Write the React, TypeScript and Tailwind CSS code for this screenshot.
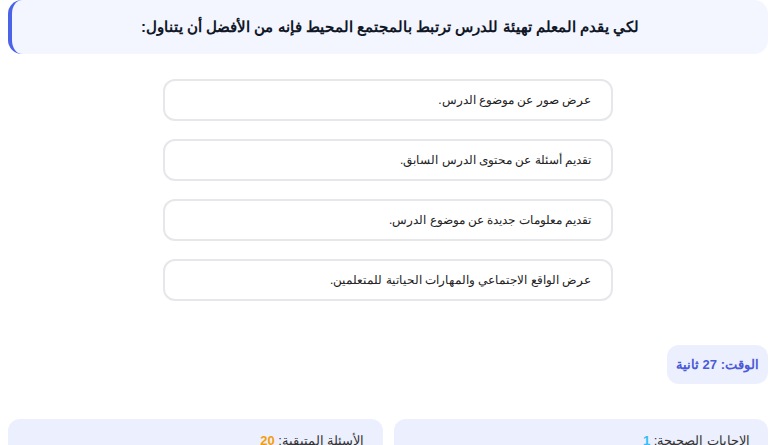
import React from "react";

const options = [
  "عرض صور عن موضوع الدرس.",
  "تقديم أسئلة عن محتوى الدرس السابق.",
  "تقديم معلومات جديدة عن موضوع الدرس.",
  "عرض الواقع الاجتماعي والمهارات الحياتية للمتعلمين.",
];

export default function App() {
  return (
    <div
      dir="rtl"
      className="w-[784px] bg-white"
      style={{ fontFamily: '"Liberation Sans", Arial, sans-serif' }}
    >
      <div className="ml-2 mr-4 flex flex-col">
        <div className="flex h-[54px] items-center justify-center rounded-[14px] border-l-4 border-[#4a63e7] bg-[#f3f6ff]">
          <h1 className="text-[15px] font-bold text-[#111827]">
            لكي يقدم المعلم تهيئة للدرس ترتبط بالمجتمع المحيط فإنه من الأفضل أن يتناول:
          </h1>
        </div>

        <div className="mt-[25px] flex flex-col items-center gap-[18px]">
          {options.map((o) => (
            <div
              key={o}
              className="flex h-[42px] w-[450px] items-center rounded-[12px] border-2 border-[#e5e7eb] bg-white px-5 text-[12px] text-[#222]"
            >
              {o}
            </div>
          ))}
        </div>

        <div className="mt-[44px] flex">
          <div className="flex h-[39px] w-[101px] items-center justify-center rounded-[12px] bg-[#eceffd] text-[13px] font-bold text-[#4a5ad8]">
            الوقت: 27 ثانية
          </div>
        </div>

        <div className="mt-[35px] grid grid-cols-2 gap-[11px]">
          <div className="h-[60px] rounded-[12px] bg-[#eceffd] px-[18px] pt-[12px] text-[13px] text-[#333]">
            الإجابات الصحيحة: <span className="font-bold text-[#38bdf8]">1</span>
          </div>
          <div className="h-[60px] rounded-[12px] bg-[#eceffd] px-[18px] pt-[12px] text-[13px] text-[#333]">
            الأسئلة المتبقية: <span className="font-bold text-[#f59e0b]">20</span>
          </div>
        </div>
      </div>
    </div>
  );
}
